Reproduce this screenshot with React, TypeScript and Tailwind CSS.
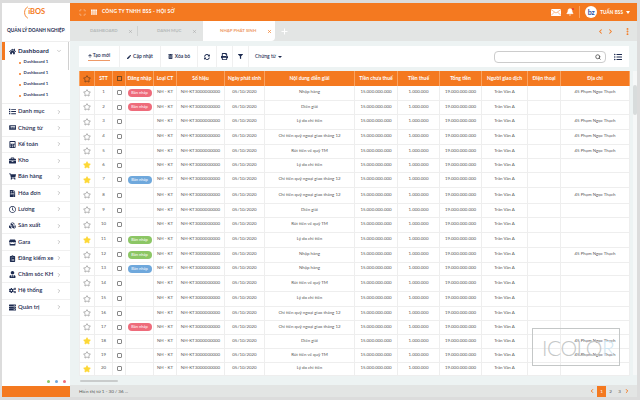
import React from 'react';
import { ChevronRight, ChevronDown, ChevronLeft, Star, Bell, X, Plus, EllipsisVertical, Search, Scan, Menu } from 'lucide-react';
import {
  FaHome, FaList, FaNewspaper, FaCalculator, FaBriefcase, FaShoppingCart, FaFileInvoice, FaRegClock, FaCubes, FaStore,
  FaClipboardList, FaUserTie, FaCogs, FaServer, FaTh, FaArrowUp, FaPen, FaTrashAlt, FaSyncAlt, FaPrint, FaFilter, FaListUl,
} from 'react-icons/fa';

const menu = [
  { label: 'Danh mục', icon: FaList },
  { label: 'Chứng từ', icon: FaNewspaper },
  { label: 'Kế toán', icon: FaCalculator },
  { label: 'Kho', icon: FaBriefcase },
  { label: 'Bán hàng', icon: FaShoppingCart },
  { label: 'Hóa đơn', icon: FaFileInvoice },
  { label: 'Lương', icon: FaRegClock },
  { label: 'Sản xuất', icon: FaCubes },
  { label: 'Gara', icon: FaStore },
  { label: 'Đăng kiểm xe', icon: FaClipboardList },
  { label: 'Chăm sóc KH', icon: FaUserTie },
  { label: 'Hệ thống', icon: FaCogs },
  { label: 'Quản trị', icon: FaServer },
];

const NHAP = 'Nhập hàng';
const DIEN = 'Diễn giải';
const LYDO = 'Lý do chi tiền';
const CHI = 'Chi tiền quỹ ngoại giao tháng 12';
const RUT = 'Rút tiền về quỹ TM';

const PINK = 'bg-[#ee6b7b]';
const BLUE = 'bg-[#6fa8dc]';
const GREEN = 'bg-[#8cc665]';

const rows = [
  { h: 'h-[14px]', text: NHAP, addr: true, draft: PINK },
  { h: 'h-[14px]', text: DIEN, draft: PINK },
  { h: 'h-[15px]', text: LYDO, addr: true },
  { h: 'h-[15px]', text: CHI, addr: true },
  { h: 'h-[14px]', text: RUT, addr: true },
  { h: 'h-[14px]', text: LYDO, star: true },
  { h: 'h-[15px]', text: CHI, star: true, draft: BLUE },
  { h: 'h-[16px]', text: CHI, addr: true },
  { h: 'h-[14px]', text: DIEN },
  { h: 'h-[15px]', text: RUT },
  { h: 'h-[15px]', text: LYDO, star: true, draft: GREEN },
  { h: 'h-[15px]', text: NHAP, addr: true, draft: GREEN },
  { h: 'h-[13px]', text: NHAP, draft: BLUE },
  { h: 'h-[16px]', text: RUT },
  { h: 'h-[15px]', text: LYDO },
  { h: 'h-[14px]', text: CHI },
  { h: 'h-[14px]', text: CHI, draft: PINK },
  { h: 'h-[14px]', text: DIEN, star: true, addr: true },
  { h: 'h-[14px]', text: RUT, addr: true },
  { h: 'h-[13px]', text: LYDO, star: true },
];

const columns = [
  { label: '', w: 'w-[15px]' },
  { label: 'STT', w: 'w-[18px]' },
  { label: '', w: 'w-[13px]' },
  { label: 'Đăng nhập', w: 'w-[28px]' },
  { label: 'Loại CT', w: 'w-[23px]' },
  { label: 'Số hiệu', w: 'w-[48px]' },
  { label: 'Ngày phát sinh', w: 'w-[40px]' },
  { label: 'Nội dung diễn giải', w: 'w-[90px]' },
  { label: 'Tiền chưa thuế', w: 'w-[43px]' },
  { label: 'Tiền thuế', w: 'w-[42px]' },
  { label: 'Tổng tiền', w: 'w-[42px]' },
  { label: 'Người giao dịch', w: 'w-[46px]' },
  { label: 'Điện thoại', w: 'w-[33px]' },
  { label: 'Địa chỉ', w: 'w-[69px]' },
];

function Logo() {
  return (
    <div className="flex items-center text-[#f47920]">
      <svg width="5" height="13" viewBox="0 0 5 13" fill="none">
        <path d="M4.5 1 C0.5 3 0.5 10 4.5 12" stroke="#f47920" strokeWidth="0.9" strokeLinecap="round" />
      </svg>
      <span className="text-[7.5px] font-bold ml-[0.5px]">iBOS</span>
    </div>
  );
}

function Sidebar() {
  return (
    <aside className="w-[68px] shrink-0 bg-white flex flex-col text-[#1d2b50] relative">
      <div className="h-[18px] flex items-center justify-center shrink-0 pr-[4px]">
        <Logo />
      </div>
      <div className="h-[21px] shrink-0 flex items-center justify-between pl-[5px] pr-[5px] border-b border-[#eeeeee] text-[4.7px] font-bold">
        <span className="whitespace-nowrap">QUẢN LÝ DOANH NGHIỆP</span>
        <Menu size={6} strokeWidth={2} />
      </div>
      <div className="h-[18px] shrink-0 flex items-center border-l-[3px] border-[#f47920] pl-[4px] pr-[8px]">
        <FaHome size={7} />
        <span className="ml-[2px] text-[6.2px] font-bold flex-1 tracking-[0.1px]">Dashboard</span>
        <ChevronDown size={6} className="text-[#999999]" />
      </div>
      <ul className="-mt-[3px] border-b border-[#eeeeee] h-[47px] shrink-0">
        {[0, 1, 2, 3].map(i => (
          <li key={i} className="h-[11px] flex items-center pl-[16.5px] gap-[3px] text-[4.4px] font-bold text-[#33405f]">
            <span className="w-[2px] h-[2px] rounded-full bg-[#f47920]" />
            Dashboard 1
          </li>
        ))}
      </ul>
      {menu.map(m => (
        <div key={m.label} className="h-[16.3px] shrink-0 flex items-center pl-[7px] pr-[8px] border-b border-[#f0f0f0]">
          <div className="w-[7px] flex justify-center"><m.icon size={7} /></div>
          <span className="ml-[2px] flex-1 text-[5.9px] font-semibold whitespace-nowrap">{m.label}</span>
          <ChevronRight size={6} className="text-[#888888]" />
        </div>
      ))}
      <div className="flex-1 flex items-end justify-end gap-[5px] pr-[4px] pb-[3px]">
        <span className="w-[3px] h-[3px] rounded-full bg-[#8cc665]" />
        <span className="w-[3px] h-[3px] rounded-full bg-[#6fa8dc]" />
        <span className="w-[3px] h-[3px] rounded-full bg-[#ee6b7b]" />
      </div>
      <div className="h-[11px] shrink-0 bg-[#f47920]" />
      {/* sidebar scrollbar thumb */}
      <div className="absolute right-[1px] top-[39px] w-px h-[28px] bg-[#d0d0d0]" />
    </aside>
  );
}

function TopBar() {
  return (
    <header className="h-[18px] shrink-0 bg-[#f47920] text-white flex items-center pl-[9px] pr-[7px]">
      <Scan size={7} strokeWidth={1.5} />
      <FaTh size={6} className="ml-[5px]" />
      <span className="ml-[5px] text-[4.9px] font-bold tracking-[0.2px]">CÔNG TY TNHH BSS - HỘI SỞ</span>
      <div className="flex-1" />
      <svg width="10" height="7" viewBox="0 0 10 7">
        <rect width="10" height="7" rx="0.5" fill="white" />
        <path d="M0 0.5L5 4L10 0.5M0 6.5L3.5 3M10 6.5L6.5 3" stroke="#f47920" strokeWidth="0.5" fill="none" />
      </svg>
      <div className="relative ml-[5px]">
        <Bell size={8} fill="white" />
        <span className="absolute top-0 right-0 w-[2px] h-[2px] rounded-full bg-[#e53935]" />
      </div>
      <div className="w-px h-[12px] bg-[#f9a25f] ml-[5px]" />
      <div className="w-[12px] h-[12px] rounded-full bg-white text-[#1f4fa3] flex items-center justify-center text-[7px] font-bold ml-[5px] leading-none">bz</div>
      <span className="ml-[3px] text-[4.6px] font-bold tracking-[0.1px]">TUẤN BSS</span>
      <svg width="4" height="3" viewBox="0 0 4 3" className="ml-[3px]"><path d="M0 0H4L2 3Z" fill="white" /></svg>
    </header>
  );
}

function TabBar() {
  return (
    <div className="h-[20px] shrink-0 bg-[#e3e5e4] flex items-stretch text-[4.4px] font-bold text-[#b5b9b9]">
      <div className="w-[67px] flex items-center pl-[20px] pr-[4px]">
        <span className="flex-1">DASHBOARD</span>
        <X size={5} className="text-[#999999]" />
      </div>
      <div className="w-[66px] flex items-center pl-[19px] pr-[6px] border-l border-[#cfd2d1] my-[5px]">
        <span className="flex-1">DANH MỤC</span>
        <X size={5} className="text-[#999999]" />
      </div>
      <div className="w-[72px] bg-white rounded-br-[4px] flex items-center pl-[17px] pr-[3px] text-[#ee9a68]">
        <span className="flex-1 whitespace-nowrap">NHẬP PHÁT SINH</span>
        <X size={5} className="text-[#f47920]" strokeWidth={3} />
      </div>
      <div className="flex items-center pl-[5px]">
        <Plus size={9} strokeWidth={2.5} className="text-white" />
      </div>
      <div className="flex-1" />
      <div className="flex items-center pr-[5px] text-[#f47920]">
        <ChevronLeft size={7} strokeWidth={3.5} />
        <ChevronRight size={7} strokeWidth={3.5} className="ml-[3px]" />
        <EllipsisVertical size={9} strokeWidth={3} className="ml-[9px]" />
      </div>
    </div>
  );
}

function ToolButton({ icon, label, w }: { icon: React.ReactNode; label?: string; w: string }) {
  return (
    <div className={`${w} h-full flex items-center justify-center gap-[2px] border-r border-[#f0f0f0] text-[5px] font-semibold text-[#1d2b50]`}>
      {icon}
      {label && <span>{label}</span>}
    </div>
  );
}

function Toolbar() {
  return (
    <div className="h-[21px] shrink-0 bg-white flex items-center">
      <div className="w-[41px] h-full flex items-center justify-center border-r border-[#f0f0f0] text-[5px] font-semibold text-[#1d2b50]">
        <div className="flex items-center gap-[1px] border-b border-[#ee9a68] pb-[1px]">
          <FaArrowUp size={4} />
          <span>Tạo mới</span>
        </div>
      </div>
      <ToolButton w="w-[41px]" label="Cập nhật" icon={<FaPen size={4} />} />
      <ToolButton w="w-[37px]" label="Xóa bỏ" icon={<FaTrashAlt size={5} />} />
      <ToolButton w="w-[19px]" icon={<FaSyncAlt size={6} />} />
      <ToolButton w="w-[16px]" icon={<FaPrint size={7} />} />
      <ToolButton w="w-[16px]" icon={<FaFilter size={5} />} />
      <div className="ml-[6px] flex items-center gap-[2px] text-[5px] font-medium text-[#1d2b50]">
        <span>Chứng từ</span>
        <svg width="4" height="2" viewBox="0 0 4 2"><path d="M0 0H4L2 2Z" fill="#1d2b50" /></svg>
      </div>
      <div className="flex-1" />
      <div className="w-[112px] h-[12px] rounded-[4px] border border-[#cccccc] flex items-center justify-end pr-[4px]">
        <Search size={6} strokeWidth={3} className="text-[#444444]" />
      </div>
      <FaListUl size={8} className="text-[#1d2b50] ml-[8px] mr-[7px]" />
    </div>
  );
}

function DataTable() {
  return (
    <table className="table-fixed border-collapse w-[550px] bg-white text-[4.4px] text-[#555555] text-center">
      <colgroup>
        {columns.map((c, i) => <col key={i} className={c.w} />)}
      </colgroup>
      <thead>
        <tr className="h-[15px] bg-[#f47920] text-white text-[5px] font-bold">
          {columns.map((c, i) => (
            <th key={i} className="border-x border-[#f9a25f] p-0 font-bold whitespace-nowrap overflow-hidden">
              {i === 0 && <Star size={8} className="mx-auto text-[#5a3a20]" />}
              {i === 2 && <div className="w-[5px] h-[5px] mx-auto border border-[#7a4a20]" />}
              {c.label}
            </th>
          ))}
        </tr>
      </thead>
      <tbody>
        {rows.map((r, i) => (
          <tr key={i} className={`${r.h} border-b border-[#eeeeee]`}>
            <td className="border-x border-[#eeeeee] p-0">
              {r.star
                ? <Star size={8} className="mx-auto text-[#fdd835]" fill="#fdd835" />
                : <Star size={8} strokeWidth={1.5} className="mx-auto text-[#666666]" />}
            </td>
            <td className="border-x border-[#eeeeee] p-0">{i + 1}</td>
            <td className="border-x border-[#eeeeee] p-0"><div className="w-[5px] h-[5px] mx-auto border border-[#888888] rounded-[1px]" /></td>
            <td className="border-x border-[#eeeeee] p-0">
              {r.draft && <div className={`${r.draft} w-[24px] h-[8px] mx-auto rounded-full text-white text-[4px] leading-[8px]`}>Bản nháp</div>}
            </td>
            <td className="border-x border-[#eeeeee] p-0">NH - KT</td>
            <td className="border-x border-[#eeeeee] p-0">NH-KT3000000000</td>
            <td className="border-x border-[#eeeeee] p-0">05/10/2020</td>
            <td className="border-x border-[#eeeeee] p-0">{r.text}</td>
            <td className="border-x border-[#eeeeee] p-0">15.000.000.000</td>
            <td className="border-x border-[#eeeeee] p-0">1.000.000</td>
            <td className="border-x border-[#eeeeee] p-0">19.000.000.000</td>
            <td className="border-x border-[#eeeeee] p-0">Trần Văn A</td>
            <td className="border-x border-[#eeeeee] p-0" />
            <td className="border-x border-[#eeeeee] p-0">{r.addr && '45 Phạm Ngọc Thạch'}</td>
          </tr>
        ))}
      </tbody>
    </table>
  );
}

function Footer() {
  return (
    <div className="h-[12px] shrink-0 bg-[#e3e5e4] flex items-center pl-[9px] pr-[7px] text-[4.6px] text-[#555555]">
      <span className="flex-1">Hiển thị từ 1 - 30 / 36 ...</span>
      <ChevronLeft size={6} strokeWidth={4} className="text-[#f47920]" />
      <span className="w-[9px] h-[11px] ml-[2px] bg-[#f47920] text-white flex items-center justify-center">1</span>
      <span className="w-[9px] text-center">2</span>
      <span className="w-[9px] text-center">3</span>
      <ChevronRight size={6} strokeWidth={4} className="text-[#f47920]" />
    </div>
  );
}

export default function App() {
  return (
    <div className="w-[640px] h-[400px] overflow-hidden bg-[#dcdcdc] pt-[3px] pb-[3px] pl-[2px] pr-[3px] flex font-['Lato','Noto_Sans',sans-serif] relative">
      <Sidebar />
      <main className="flex-1 min-w-0 flex flex-col">
        <TopBar />
        <TabBar />
        <div className="flex-1 min-h-0 bg-[#edf3f3] pt-[5px] pl-[9px] flex flex-col">
          <div className="w-[550px]"><Toolbar /></div>
          <div className="flex mt-[4px]">
            <DataTable />
            <div className="ml-[3px] w-[4px] h-[304px] bg-[#f6f8f8] pt-[14px]">
              <div className="h-[30px] bg-[#d8dcdc] rounded-full" />
            </div>
          </div>
          <div className="w-[38px] h-[2px] mt-[4px] ml-px bg-[#c9cccc] rounded-full" />
        </div>
        <Footer />
      </main>
      {/* watermark */}
      <div className="absolute left-[532px] top-[328px] w-[88px] h-[38px] border-[1.5px] border-[#c4c7c7] flex items-center pl-[9px] text-[21px] font-light leading-none text-[#c4c7c7] tracking-[-0.5px] pointer-events-none">
        ICOLO<span className="text-[#cfe6f2]">R</span>
      </div>
    </div>
  );
}
